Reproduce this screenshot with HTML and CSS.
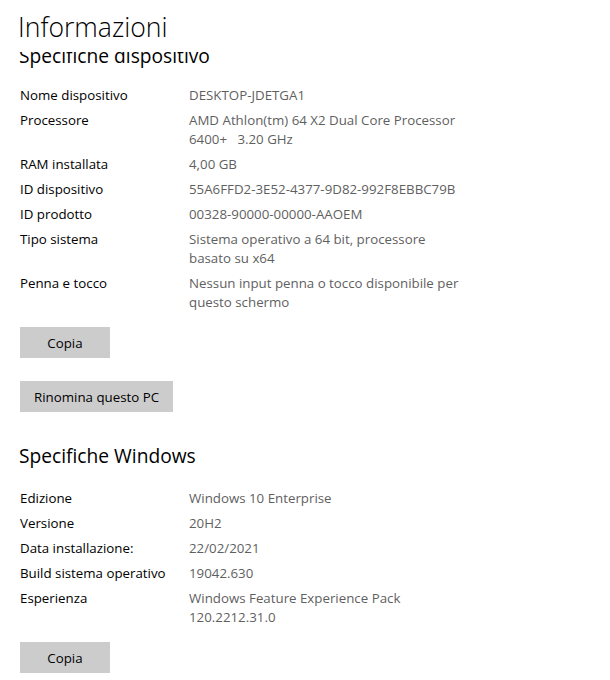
FILE: index.html
```html
<!DOCTYPE html>
<html lang="it">
<head>
<meta charset="utf-8">
<title>Informazioni</title>
<link rel="stylesheet" href="styles.css">
</head>
<body>
<header class="top">
  <h1 class="title">Informazioni</h1>
</header>
<main class="viewport">
  <div class="content">
    <section class="sect sect-first">
      <h2 class="sect-title">Specifiche dispositivo</h2>
      <dl class="specs">
        <div class="row"><dt>Nome dispositivo</dt><dd>DESKTOP-JDETGA1</dd></div>
        <div class="row"><dt>Processore</dt><dd>AMD Athlon(tm) 64 X2 Dual Core Processor<br>6400+&nbsp;&nbsp; 3.20 GHz</dd></div>
        <div class="row"><dt>RAM installata</dt><dd>4,00 GB</dd></div>
        <div class="row"><dt>ID dispositivo</dt><dd>55A6FFD2-3E52-4377-9D82-992F8EBBC79B</dd></div>
        <div class="row"><dt>ID prodotto</dt><dd>00328-90000-00000-AAOEM</dd></div>
        <div class="row"><dt>Tipo sistema</dt><dd>Sistema operativo a 64 bit, processore<br>basato su x64</dd></div>
        <div class="row"><dt>Penna e tocco</dt><dd>Nessun input penna o tocco disponibile per<br>questo schermo</dd></div>
      </dl>
      <div class="actions">
        <button class="btn">Copia</button>
        <button class="btn">Rinomina questo PC</button>
      </div>
    </section>
    <section class="sect sect-win">
      <h2 class="sect-title">Specifiche Windows</h2>
      <dl class="specs">
        <div class="row"><dt>Edizione</dt><dd>Windows 10 Enterprise</dd></div>
        <div class="row"><dt>Versione</dt><dd>20H2</dd></div>
        <div class="row"><dt>Data installazione:</dt><dd>22/02/2021</dd></div>
        <div class="row"><dt>Build sistema operativo</dt><dd>19042.630</dd></div>
        <div class="row"><dt>Esperienza</dt><dd>Windows Feature Experience Pack<br>120.2212.31.0</dd></div>
      </dl>
      <div class="actions">
        <button class="btn">Copia</button>
      </div>
    </section>
  </div>
</main>
</body>
</html>
```
FILE: styles.css
```css
html, body {
  margin: 0;
  padding: 0;
  background: #ffffff;
  height: 100%;
  overflow: hidden;
}

body {
  font-family: "Open Sans", "Noto Sans", "Liberation Sans", sans-serif;
  font-size: 13.3px;
  color: #000000;
  display: flex;
  flex-direction: column;
}

.top {
  height: 52px;
  flex: none;
  padding: 7px 0 0 18px;
  box-sizing: border-box;
  background: #ffffff;
  position: relative;
  z-index: 1;
}

.title {
  margin: 0;
  font-size: 26.6px;
  font-weight: 300;
  line-height: 40px;
  color: #000;
}

.viewport {
  flex: 1;
  overflow: hidden;
}

.content {
  padding-left: 20px;
  margin-top: -9px;
}

.sect-title {
  margin: 0;
  font-size: 19.2px;
  font-weight: 400;
  line-height: 26px;
  color: #000;
  margin-left: -1px;
}

.sect-first .sect-title {
  margin-bottom: 17px;
}

.sect-win {
  margin-top: 31px;
}

.sect-win .sect-title {
  margin-bottom: 20px;
}

.specs {
  margin: 0;
  display: flex;
  flex-direction: column;
  gap: 6px;
}

.row {
  display: grid;
  grid-template-columns: 169px 1fr;
  line-height: 19px;
}

.row dt {
  color: #000;
  white-space: nowrap;
}

.row dd {
  margin: 0;
  color: #5f5f5f;
  white-space: nowrap;
}

.actions {
  margin-top: 15px;
  display: flex;
  flex-direction: column;
  align-items: flex-start;
  gap: 23px;
}

.btn {
  font-family: inherit;
  font-size: 13.3px;
  color: #000;
  background: #cccccc;
  border: none;
  border-radius: 0;
  height: 31px;
  min-width: 90px;
  padding: 1px 14px 0;
  margin: 0;
  line-height: 30px;
}
```
